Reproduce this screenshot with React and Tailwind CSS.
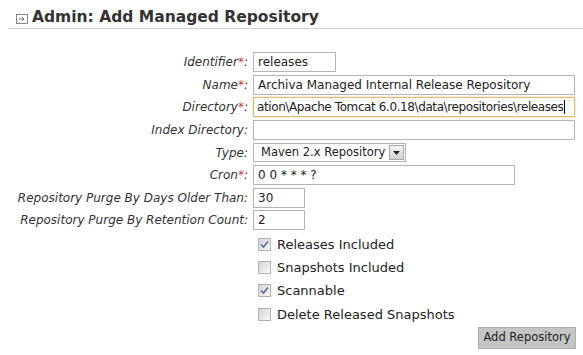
import React from "react";

const font = { fontFamily: '"DejaVu Sans", Verdana, sans-serif' };

function Req() {
  return <span className="text-[#cc3333]">*</span>;
}

function Row({ label, req, children }) {
  return (
    <div className="flex items-center h-[22.6px]">
      <div className="w-[253px] shrink-0 text-right italic text-[#333] pr-[5px] whitespace-nowrap">
        {label}
        {req && <Req />}:
      </div>
      {children}
    </div>
  );
}

function TextBox({ value, w }) {
  return (
    <div
      className={`h-[20px] ${w} border border-[#b4b4b4] bg-white px-[4px] flex items-center text-[#222] whitespace-nowrap overflow-hidden`}
    >
      {value}
    </div>
  );
}

function Check({ checked, label }) {
  return (
    <div className="flex items-center h-[23.3px] pl-[258px]">
      <div className="w-[13px] h-[13px] border border-[#b0b0b0] bg-gradient-to-br from-[#d4d4d4] to-[#f8f8f8] flex items-center justify-center">
        {checked && (
          <svg width="9" height="9" viewBox="0 0 9 9">
            <path d="M1 4.5 L3.5 7 L8 1.5" fill="none" stroke="#5a6a9a" strokeWidth="1.6" />
          </svg>
        )}
      </div>
      <span className="ml-[6px] text-[#222] text-[13px]">{label}</span>
    </div>
  );
}

export default function App() {
  return (
    <div className="w-[583px] h-[355px] bg-white overflow-hidden text-[12px]" style={font}>
      <div className="pl-[8px] pt-[8px]">
        <div className="flex items-center h-[21px] border-b border-[#cfcfcf]">
          <svg width="13" height="11" viewBox="0 0 13 11" className="ml-[8px] mr-[3px] mt-[3px] shrink-0">
            <rect x="0.5" y="0.5" width="11" height="9" fill="white" stroke="#888" />
            <path d="M3 5 H8 M6 3 L8 5 L6 7" fill="none" stroke="#777" strokeWidth="1" />
          </svg>
          <h2 className="text-[15.5px] font-bold text-[#333] leading-none">Admin: Add Managed Repository</h2>
        </div>
      </div>

      <div className="mt-[22px]">
        <Row label="Identifier" req>
          <TextBox value="releases" w="w-[83px]" />
        </Row>
        <Row label="Name" req>
          <TextBox value="Archiva Managed Internal Release Repository" w="w-[322px]" />
        </Row>
        <Row label="Directory" req>
          <div className="h-[20px] w-[322px] border border-[#e3b868] shadow-[0_0_2px_#f0d090] bg-white px-[3px] flex items-center text-[#222] whitespace-nowrap overflow-hidden">
            <span className="shrink-0 tracking-[-0.4px]">ation\Apache Tomcat 6.0.18\data\repositories\releases</span>
            <span className="inline-block shrink-0 w-px h-[14px] bg-black ml-px" />
          </div>
        </Row>
        <Row label="Index Directory">
          <TextBox value="" w="w-[322px]" />
        </Row>
        <Row label="Type">
          <div className="h-[19px] w-[153px] border border-[#b4b4b4] bg-white flex items-center">
            <span className="pl-[7px] flex-1 text-[#222] text-[11.5px] whitespace-nowrap overflow-hidden">Maven 2.x Repository</span>
            <div className="w-[15px] h-[15px] mr-[1px] shrink-0 border border-[#a8a8a8] bg-gradient-to-b from-[#f4f4f4] to-[#d0d0d0] flex items-center justify-center">
              <svg width="7" height="4" viewBox="0 0 7 4">
                <path d="M0 0 H7 L3.5 4 Z" fill="#222" />
              </svg>
            </div>
          </div>
        </Row>
        <Row label="Cron" req>
          <TextBox value="0 0 * * * ?" w="w-[262px]" />
        </Row>
        <Row label="Repository Purge By Days Older Than">
          <TextBox value="30" w="w-[52px]" />
        </Row>
        <Row label="Repository Purge By Retention Count">
          <TextBox value="2" w="w-[52px]" />
        </Row>

        <div className="mt-[1px]">
          <Check checked label="Releases Included" />
          <Check label="Snapshots Included" />
          <Check checked label="Scannable" />
          <Check label="Delete Released Snapshots" />
        </div>

        <div className="flex justify-end pr-[7px] mt-[1px]">
          <button className="h-[22px] w-[98px] bg-[#c4c4c4] border border-[#b0b0b0] text-[#222] text-[11.5px] whitespace-nowrap">
            Add Repository
          </button>
        </div>
      </div>
    </div>
  );
}
